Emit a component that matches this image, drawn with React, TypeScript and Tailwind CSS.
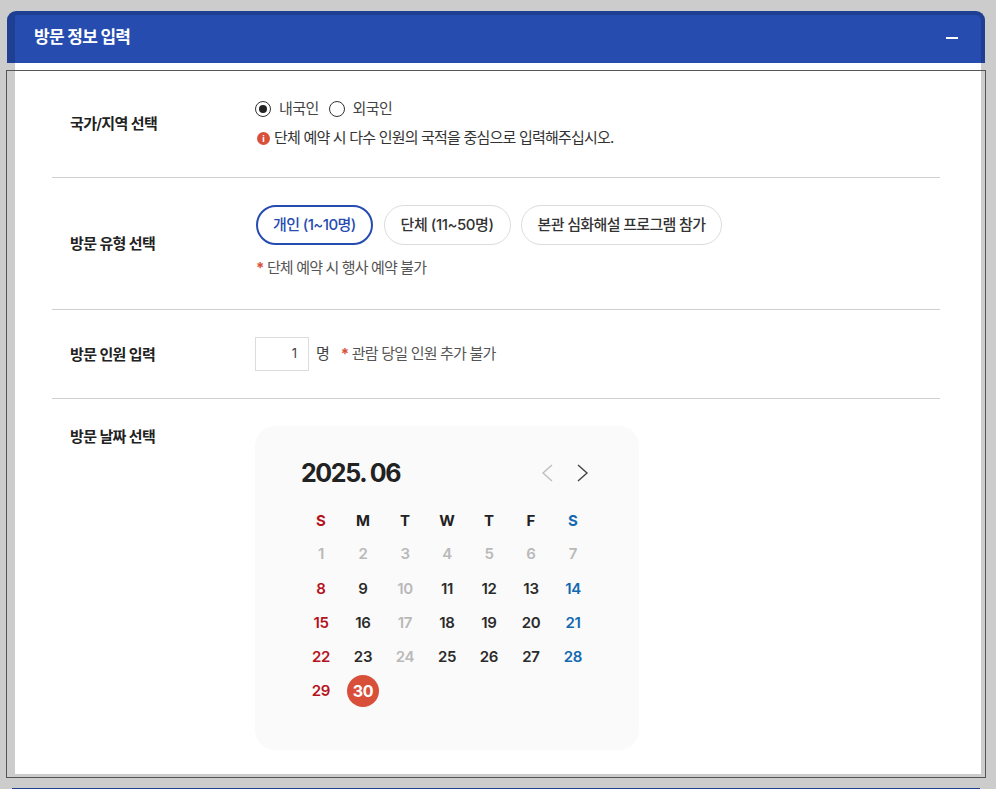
const font = 'font-["Inter","Noto_Sans_CJK_KR",sans-serif]';

const weeks: { d: number; c: string }[][] = [
  [1, 2, 3, 4, 5, 6, 7].map((d) => ({ d, c: "text-[#b9b9b9] pb-[2px]" })),
  [
    { d: 8, c: "text-[#b5121b]" },
    { d: 9, c: "text-[#2b2b2b]" },
    { d: 10, c: "text-[#b9b9b9]" },
    { d: 11, c: "text-[#2b2b2b]" },
    { d: 12, c: "text-[#2b2b2b]" },
    { d: 13, c: "text-[#2b2b2b]" },
    { d: 14, c: "text-[#1269b0]" },
  ],
  [
    { d: 15, c: "text-[#b5121b]" },
    { d: 16, c: "text-[#2b2b2b]" },
    { d: 17, c: "text-[#b9b9b9]" },
    { d: 18, c: "text-[#2b2b2b]" },
    { d: 19, c: "text-[#2b2b2b]" },
    { d: 20, c: "text-[#2b2b2b]" },
    { d: 21, c: "text-[#1269b0]" },
  ],
  [
    { d: 22, c: "text-[#b5121b]" },
    { d: 23, c: "text-[#2b2b2b]" },
    { d: 24, c: "text-[#b9b9b9]" },
    { d: 25, c: "text-[#2b2b2b]" },
    { d: 26, c: "text-[#2b2b2b]" },
    { d: 27, c: "text-[#2b2b2b]" },
    { d: 28, c: "text-[#1269b0]" },
  ],
];

const days = [
  { t: "S", c: "text-[#b5121b]" },
  { t: "M", c: "text-[#222]" },
  { t: "T", c: "text-[#222]" },
  { t: "W", c: "text-[#222]" },
  { t: "T", c: "text-[#222]" },
  { t: "F", c: "text-[#222]" },
  { t: "S", c: "text-[#1269b0]" },
];

function Radio({ checked, label }: { checked?: boolean; label: string }) {
  return (
    <div className="flex items-center gap-2">
      <span className="w-4 h-4 rounded-full border border-[#333] flex items-center justify-center bg-white">
        {checked && <span className="w-2 h-2 rounded-full bg-[#222]" />}
      </span>
      <span className="text-[15px] text-[#444] tracking-[-0.6px]">{label}</span>
    </div>
  );
}

function Row({ label, className, children }: { label: string; className: string; children: React.ReactNode }) {
  return (
    <div className={`flex border-b border-[#cfcfcf] ${className}`}>
      <div className="w-[203px] pl-[18px] self-center text-[15px] font-semibold text-[#222] tracking-[-0.65px]">
        {label}
      </div>
      <div className="flex-1">{children}</div>
    </div>
  );
}

function Calendar() {
  return (
    <div className="w-[384px] h-[324px] rounded-[20px] bg-[#fafafa] pt-[33px] px-[46px]">
      <div className="flex items-center justify-between h-[30px]">
        <span className="text-[25px] font-bold text-[#222] tracking-[-1.4px]">2025. 06</span>
        <div className="flex items-center gap-[19px] mr-[3px] -mt-[2px]">
          <svg width="16" height="20" viewBox="0 0 16 20" fill="none" stroke="#bdbdbd" strokeWidth="1.4">
            <path d="M13 2 4 10l9 8" />
          </svg>
          <svg width="16" height="20" viewBox="0 0 16 20" fill="none" stroke="#444" strokeWidth="1.4">
            <path d="m4 2 9 8-9 8" />
          </svg>
        </div>
      </div>
      <div className="grid grid-cols-7 w-[294px] ml-[-1px] mt-[15px]">
        {days.map((x, i) => (
          <div key={i} className={`h-[34px] flex items-center justify-center text-[15px] font-bold ${x.c}`}>
            {x.t}
          </div>
        ))}
        {weeks.flat().map((x) => (
          <div key={x.d} className={`h-[34px] flex items-center justify-center text-[15px] font-semibold tracking-[-0.3px] ${x.c}`}>
            {x.d}
          </div>
        ))}
        <div className="h-[34px] flex items-center justify-center text-[15px] font-semibold tracking-[-0.3px] text-[#b5121b]">29</div>
        <div className="h-[34px] flex items-center justify-center">
          <span className="w-8 h-8 rounded-full bg-[#d9503a] text-white text-[16px] font-bold tracking-[-0.3px] flex items-center justify-center">30</span>
        </div>
      </div>
    </div>
  );
}

export default function App() {
  return (
    <div className={`relative h-[789px] overflow-hidden bg-[#cccccc] pt-[11px] ${font}`}>
      <div className="ml-[7px] w-[978px] h-[52px] rounded-t-[9px] bg-[#264cb0] border-t-4 border-l-8 border-r-4 border-[#1f3f93] flex items-center justify-between pl-[19px] pr-[23px]">
        <h2 className="text-[17px] font-bold text-white tracking-[-0.7px] mb-[2px]">방문 정보 입력</h2>
        <span className="w-3 h-[2px] bg-white mb-[2px]" />
      </div>

      <div className="ml-[15px] w-[966px] h-[711px] bg-white pl-[37px] pr-[41px]">
        <Row label="국가/지역 선택" className="h-[115px] pt-[37px] pb-[29px]">
          <div className="flex items-center gap-[10px] h-[18px]">
            <Radio checked label="내국인" />
            <Radio label="외국인" />
          </div>
          <div className="flex items-center gap-1 mt-[9px] ml-[2px]">
            <span className="w-[13px] h-[13px] rounded-full bg-[#d9503a] text-white text-[9px] font-bold leading-none flex items-center justify-center">i</span>
            <span className="text-[15px] text-[#333] tracking-[-0.8px]">단체 예약 시 다수 인원의 국적을 중심으로 입력해주십시오.</span>
          </div>
        </Row>

        <Row label="방문 유형 선택" className="h-[132px] pt-[27px] pb-[26px]">
          <div className="flex ml-[1px]">
            <button className="h-10 px-[15px] rounded-full border-2 border-[#264cb0] text-[15px] font-medium text-[#264cb0] tracking-[-0.6px]">개인 (1~10명)</button>
            <button className="ml-[11px] h-10 px-4 rounded-full border border-[#dcdcdc] text-[15px] font-medium text-[#333] tracking-[-0.45px]">단체 (11~50명)</button>
            <button className="ml-[10px] h-10 px-4 rounded-full border border-[#dcdcdc] text-[15px] font-medium text-[#333] tracking-[-0.65px]">본관 심화해설 프로그램 참가</button>
          </div>
          <p className="mt-[12px] ml-[1px] text-[15px] text-[#555] tracking-[-0.85px]">
            <span className="text-[#d9503a] font-bold">*</span> 단체 예약 시 행사 예약 불가
          </p>
        </Row>

        <Row label="방문 인원 입력" className="h-[89px] pt-[2px]">
          <div className="flex items-center -mt-[2px] h-[calc(100%+2px)]">
            <div className="w-[54px] h-[34px] border border-[#dcdcdc] flex items-center justify-end pr-[11px] text-[13px] text-[#444]">1</div>
            <span className="ml-[7px] text-[15px] text-[#444]">명</span>
            <p className="ml-[11px] text-[15px] text-[#555] tracking-[-0.8px]">
              <span className="text-[#d9503a] font-bold">*</span> 관람 당일 인원 추가 불가
            </p>
          </div>
        </Row>

        <div className="flex pt-[27px]">
          <div className="w-[203px] pl-[18px] text-[15px] font-semibold text-[#222] tracking-[-0.65px]">방문 날짜 선택</div>
          <Calendar />
        </div>
      </div>

      {/* next section's header, peeking in at the bottom */}
      <div className="ml-[12px] w-[968px] h-[2px] mt-[14px] bg-[#1f3f93]" />

      <div className="absolute left-[6px] top-[70px] w-[980px] h-[708px] border border-[#555] pointer-events-none" />
    </div>
  );
}
